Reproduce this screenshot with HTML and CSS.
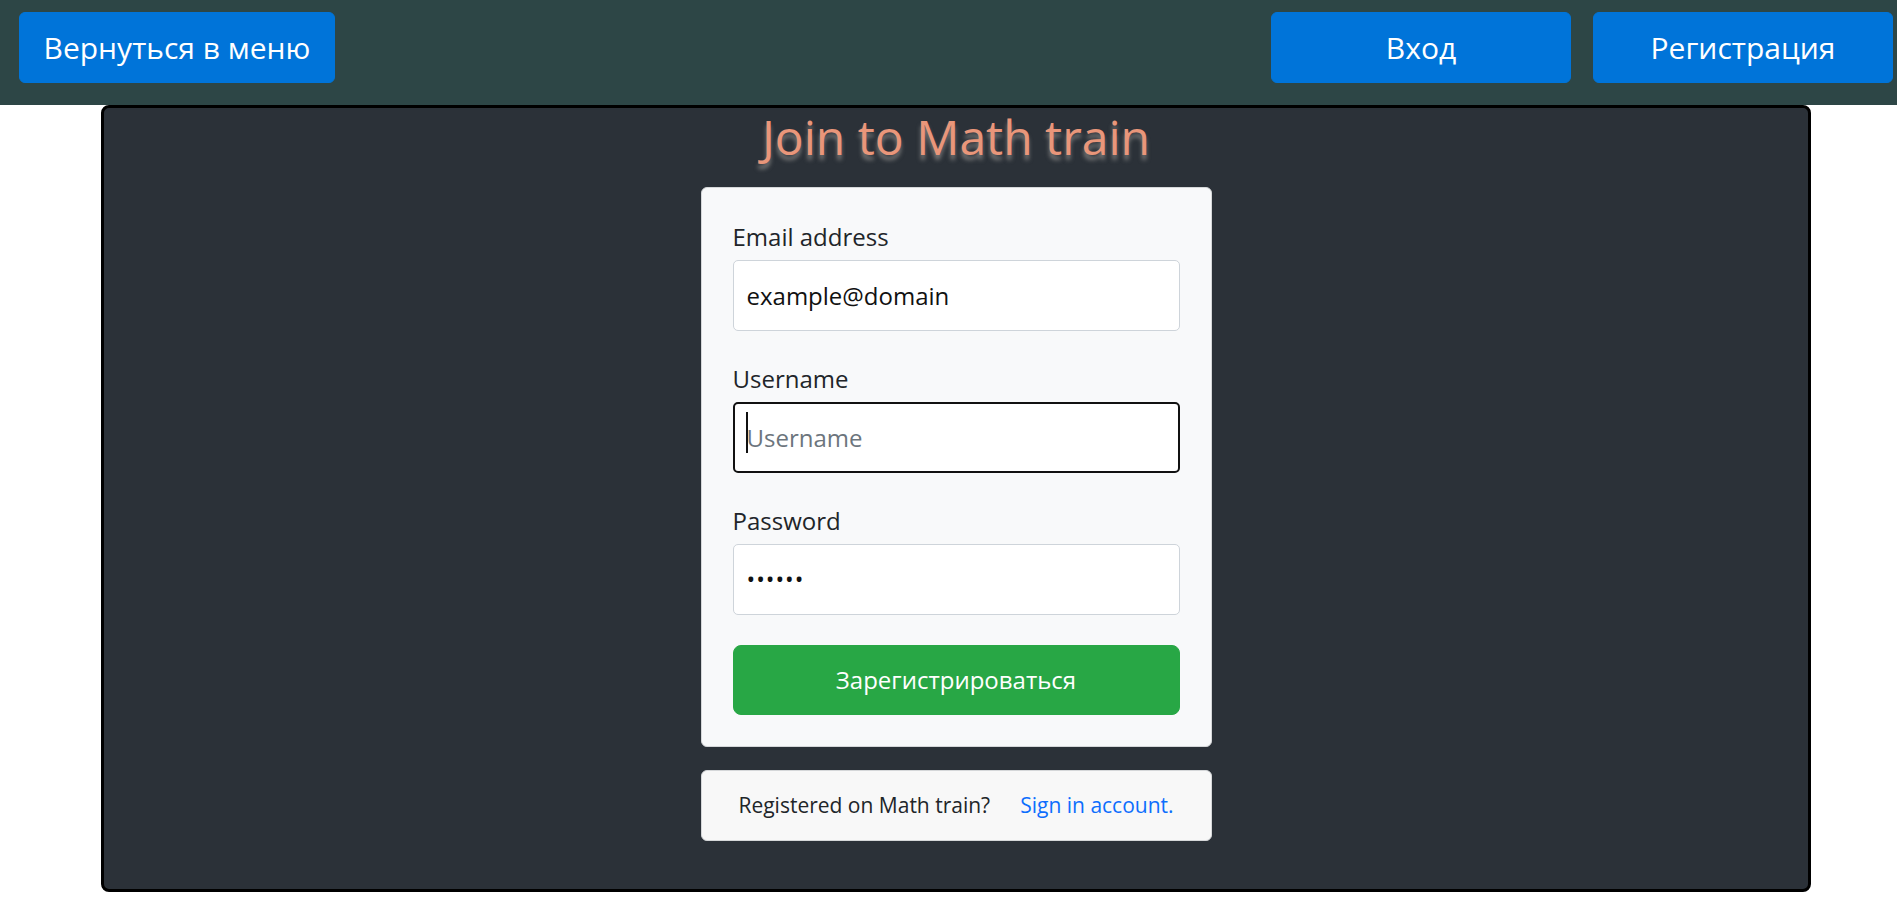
FILE: index.html
```html
<!DOCTYPE html>
<html lang="ru">
<head>
<meta charset="utf-8">
<title>Math train</title>
<link rel="stylesheet" href="styles.css">
</head>
<body>
<header class="topbar">
  <button class="nav-btn nav-back" type="button">Вернуться в меню</button>
  <div class="nav-right">
    <button class="nav-btn nav-fixed" type="button">Вход</button>
    <button class="nav-btn nav-fixed" type="button">Регистрация</button>
  </div>
</header>
<main class="stage">
  <h1 class="title">Join to Math train</h1>
  <form class="card">
    <div class="group">
      <label class="label" for="email">Email address</label>
      <input class="field" id="email" type="email" value="example@domain">
    </div>
    <div class="group">
      <label class="label" for="user">Username</label>
      <div class="field-wrap">
        <input class="field field-focus" id="user" type="text" placeholder="Username">
        <span class="caret"></span>
      </div>
    </div>
    <div class="group">
      <label class="label" for="pass">Password</label>
      <input class="field field-pass" id="pass" type="password" value="123456">
    </div>
    <button class="submit" type="button">Зарегистрироваться</button>
  </form>
  <div class="card-foot">
    <span class="foot-text">Registered on Math train?</span>
    <a class="foot-link" href="#">Sign in account.</a>
  </div>
</main>
</body>
</html>
```

FILE: styles.css
```css
* { box-sizing: border-box; }

html, body {
  margin: 0;
  padding: 0;
  background: #ffffff;
  font-family: "Open Sans", "Noto Sans", sans-serif;
  color: #212529;
}

.topbar {
  height: 105px;
  background: #2d4646;
  display: flex;
  align-items: flex-start;
  justify-content: space-between;
  padding: 12px 4px 0 19px;
}

.nav-right {
  display: flex;
  gap: 22px;
}

.nav-btn {
  height: 71px;
  background: #0074d9;
  color: #ffffff;
  border: 1px solid #0074d9;
  border-radius: 6px;
  font-family: "Open Sans", "Noto Sans", sans-serif;
  font-size: 30px;
  line-height: 45px;
  padding: 0 25px;
  cursor: pointer;
}

.nav-back {
  width: 316px;
  padding: 0;
}

.nav-fixed {
  width: 300px;
  padding: 0;
}

.stage {
  margin: 0 86px 0 101px;
  min-height: 787px;
  background: #2b3138;
  border: 3px solid #000000;
  border-radius: 8px;
  display: flex;
  flex-direction: column;
  align-items: center;
  padding: 0 0 40px;
}

.title {
  margin: 0 0 21px;
  font-size: 48px;
  line-height: 57.6px;
  font-weight: 400;
  color: #e9967a;
  text-shadow: 0 5px 4px #7a7a7a;
}

.card {
  width: 511px;
  background: #f8f9fa;
  border: 1px solid #d5d7d9;
  border-radius: 6px;
  padding: 31px;
  margin: 0;
}

.group {
  display: flex;
  flex-direction: column;
  margin-bottom: 30px;
}

.label {
  font-size: 24px;
  line-height: 36px;
  margin-bottom: 5px;
  color: #212529;
}

.field-wrap {
  position: relative;
  display: flex;
}

.field {
  width: 100%;
  height: 71px;
  border: 1px solid #ced4da;
  border-radius: 5px;
  background: #ffffff;
  font-family: "Open Sans", "Noto Sans", sans-serif;
  font-size: 24px;
  line-height: 36px;
  color: #111111;
  padding: 0 13px;
  outline: none;
}

.field::placeholder {
  color: #6c757d;
}

.field-focus {
  border: 2px solid #111111;
  padding: 0 12px;
}

.field-pass {
  font-size: 23px;
  letter-spacing: 1px;
}

.caret {
  position: absolute;
  left: 13px;
  top: 10px;
  width: 2px;
  height: 41px;
  background: #111111;
}

.submit {
  display: block;
  width: 100%;
  height: 70px;
  margin-top: 4px;
  background: #28a745;
  color: #ffffff;
  border: 1px solid #28a745;
  border-radius: 8px;
  font-family: "Open Sans", "Noto Sans", sans-serif;
  font-size: 24px;
  line-height: 36px;
  cursor: pointer;
}

.card-foot {
  width: 511px;
  margin-top: 23px;
  background: #f8f8f8;
  border: 1px solid #d5d7d9;
  border-radius: 6px;
  padding: 19px 20px;
  display: flex;
  justify-content: center;
  gap: 30px;
  font-size: 21px;
  line-height: 31.5px;
}

.foot-text {
  color: #212529;
}

.foot-link {
  color: #0d6efd;
  text-decoration: none;
}
```
